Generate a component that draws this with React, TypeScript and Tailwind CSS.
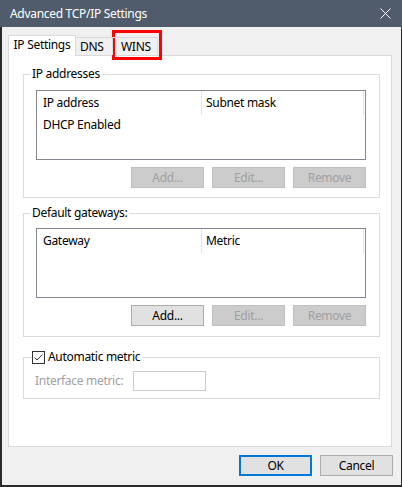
import React from "react";

const btnBase = "w-[73px] h-[21px] flex items-center justify-center";
const btnOn = `${btnBase} border border-[#adadad] bg-[#e1e1e1] text-black`;
const btnOff = `${btnBase} border border-[#bfbfbf] bg-[#cccccc] text-[#a0a0a0]`;

function ListView({ cols, rows }: { cols: [string, string]; rows: string[] }) {
  return (
    <div className="h-[70px] border border-[#828790] bg-white">
      <div className="flex h-[24px]">
        <div className="w-[165px] border-r border-[#e5e5e5] pl-[6px] flex items-center">{cols[0]}</div>
        <div className="w-[162px] border-r border-[#e5e5e5] pl-[4px] flex items-center">{cols[1]}</div>
      </div>
      {rows.map((r) => (
        <div key={r} className="h-[20px] pl-[6px] flex items-center">
          {r}
        </div>
      ))}
    </div>
  );
}

function ButtonRow({ addEnabled }: { addEnabled: boolean }) {
  return (
    <div className="flex justify-end gap-[8px] mt-[7px]">
      <button className={addEnabled ? btnOn : btnOff}>Add...</button>
      <button className={btnOff}>Edit...</button>
      <button className={btnOff}>Remove</button>
    </div>
  );
}

export default function App() {
  return (
    <div className="relative w-[402px] h-[487px] flex flex-col font-['Noto_Sans',sans-serif] text-[12px] leading-[16px] tracking-[-0.3px] text-black select-none">
      {/* Title bar */}
      <div className="h-[27px] shrink-0 bg-[#505c6b] flex items-center justify-between pl-[10px] pr-[11px]">
        <span className="text-white">Advanced TCP/IP Settings</span>
        <svg width="11" height="11" viewBox="0 0 11 11" className="text-white">
          <path d="M0.5 0.5 L10.5 10.5 M10.5 0.5 L0.5 10.5" stroke="currentColor" strokeWidth="1" />
        </svg>
      </div>

      {/* Dialog body */}
      <div className="flex-1 flex flex-col bg-[#f0f0f0] border-l-2 border-r border-b-2 border-[#2b2b2b] pl-[6px] pr-[8px]">
        {/* Tabs */}
        <div className="flex items-end h-[21px] mt-[8px] relative z-10">
          <div className="h-[21px] w-[68px] bg-white border-t border-l border-r border-[#d9d9d9] flex items-center justify-center pb-[2px]">
            IP Settings
          </div>
          <div className="h-[18px] w-[37px] mb-[1px] border-t border-r border-[#d9d9d9] flex items-center pl-[4px]">
            DNS
          </div>
          <div className="h-[18px] w-[45px] mb-[1px] border-t border-r border-[#d9d9d9] flex items-center pl-[8px]">
            WINS
          </div>
        </div>

        {/* Tab panel */}
        <div className="-mt-[1px] w-[384px] h-[392px] shrink-0 bg-white border border-[#d9d9d9] pl-[14px] pt-[10px]">
          <fieldset className="w-[357px] border border-[#dcdcdc] pb-[9px]">
            <legend className="ml-[6px] px-[2px]">IP addresses</legend>
            <div className="ml-[12px] w-[330px] mt-[8px]">
              <ListView cols={["IP address", "Subnet mask"]} rows={["DHCP Enabled"]} />
              <ButtonRow addEnabled={false} />
            </div>
          </fieldset>

          <fieldset className="w-[357px] border border-[#dcdcdc] pb-[10px] mt-[7px]">
            <legend className="ml-[6px] px-[2px]">Default gateways:</legend>
            <div className="ml-[12px] w-[330px] mt-[7px]">
              <ListView cols={["Gateway", "Metric"]} rows={[]} />
              <ButtonRow addEnabled={true} />
            </div>
          </fieldset>

          <fieldset className="w-[357px] border border-[#dcdcdc] pb-[7px] mt-[12px]">
            <legend className="ml-[8px] pr-[2px]">
              <span className="flex items-center gap-[3px]">
                <span className="w-[13px] h-[13px] border border-[#333333] bg-white flex items-center justify-center">
                  <svg width="11" height="11" viewBox="0 0 11 11">
                    <path d="M1.5 5.5 L4 8 L9.5 2.5" fill="none" stroke="#333333" strokeWidth="1" />
                  </svg>
                </span>
                Automatic metric
              </span>
            </legend>
            <div className="ml-[11px] mt-[6px] flex items-center">
              <span className="w-[98px] text-[#a0a0a0]">Interface metric:</span>
              <span className="w-[73px] h-[20px] border border-[#cccccc] bg-white" />
            </div>
          </fieldset>
        </div>

        {/* OK / Cancel */}
        <div className="flex justify-end gap-[8px] mt-[8px]">
          <button className={`${btnBase} border-2 border-[#0078d7] bg-[#e1e1e1]`}>OK</button>
          <button className={btnOn}>Cancel</button>
        </div>
      </div>

      {/* Red annotation box round the WINS tab */}
      <div className="absolute left-[112px] top-[30px] w-[50px] h-[30px] border-[3px] border-[#ff0000] pointer-events-none" />
    </div>
  );
}
